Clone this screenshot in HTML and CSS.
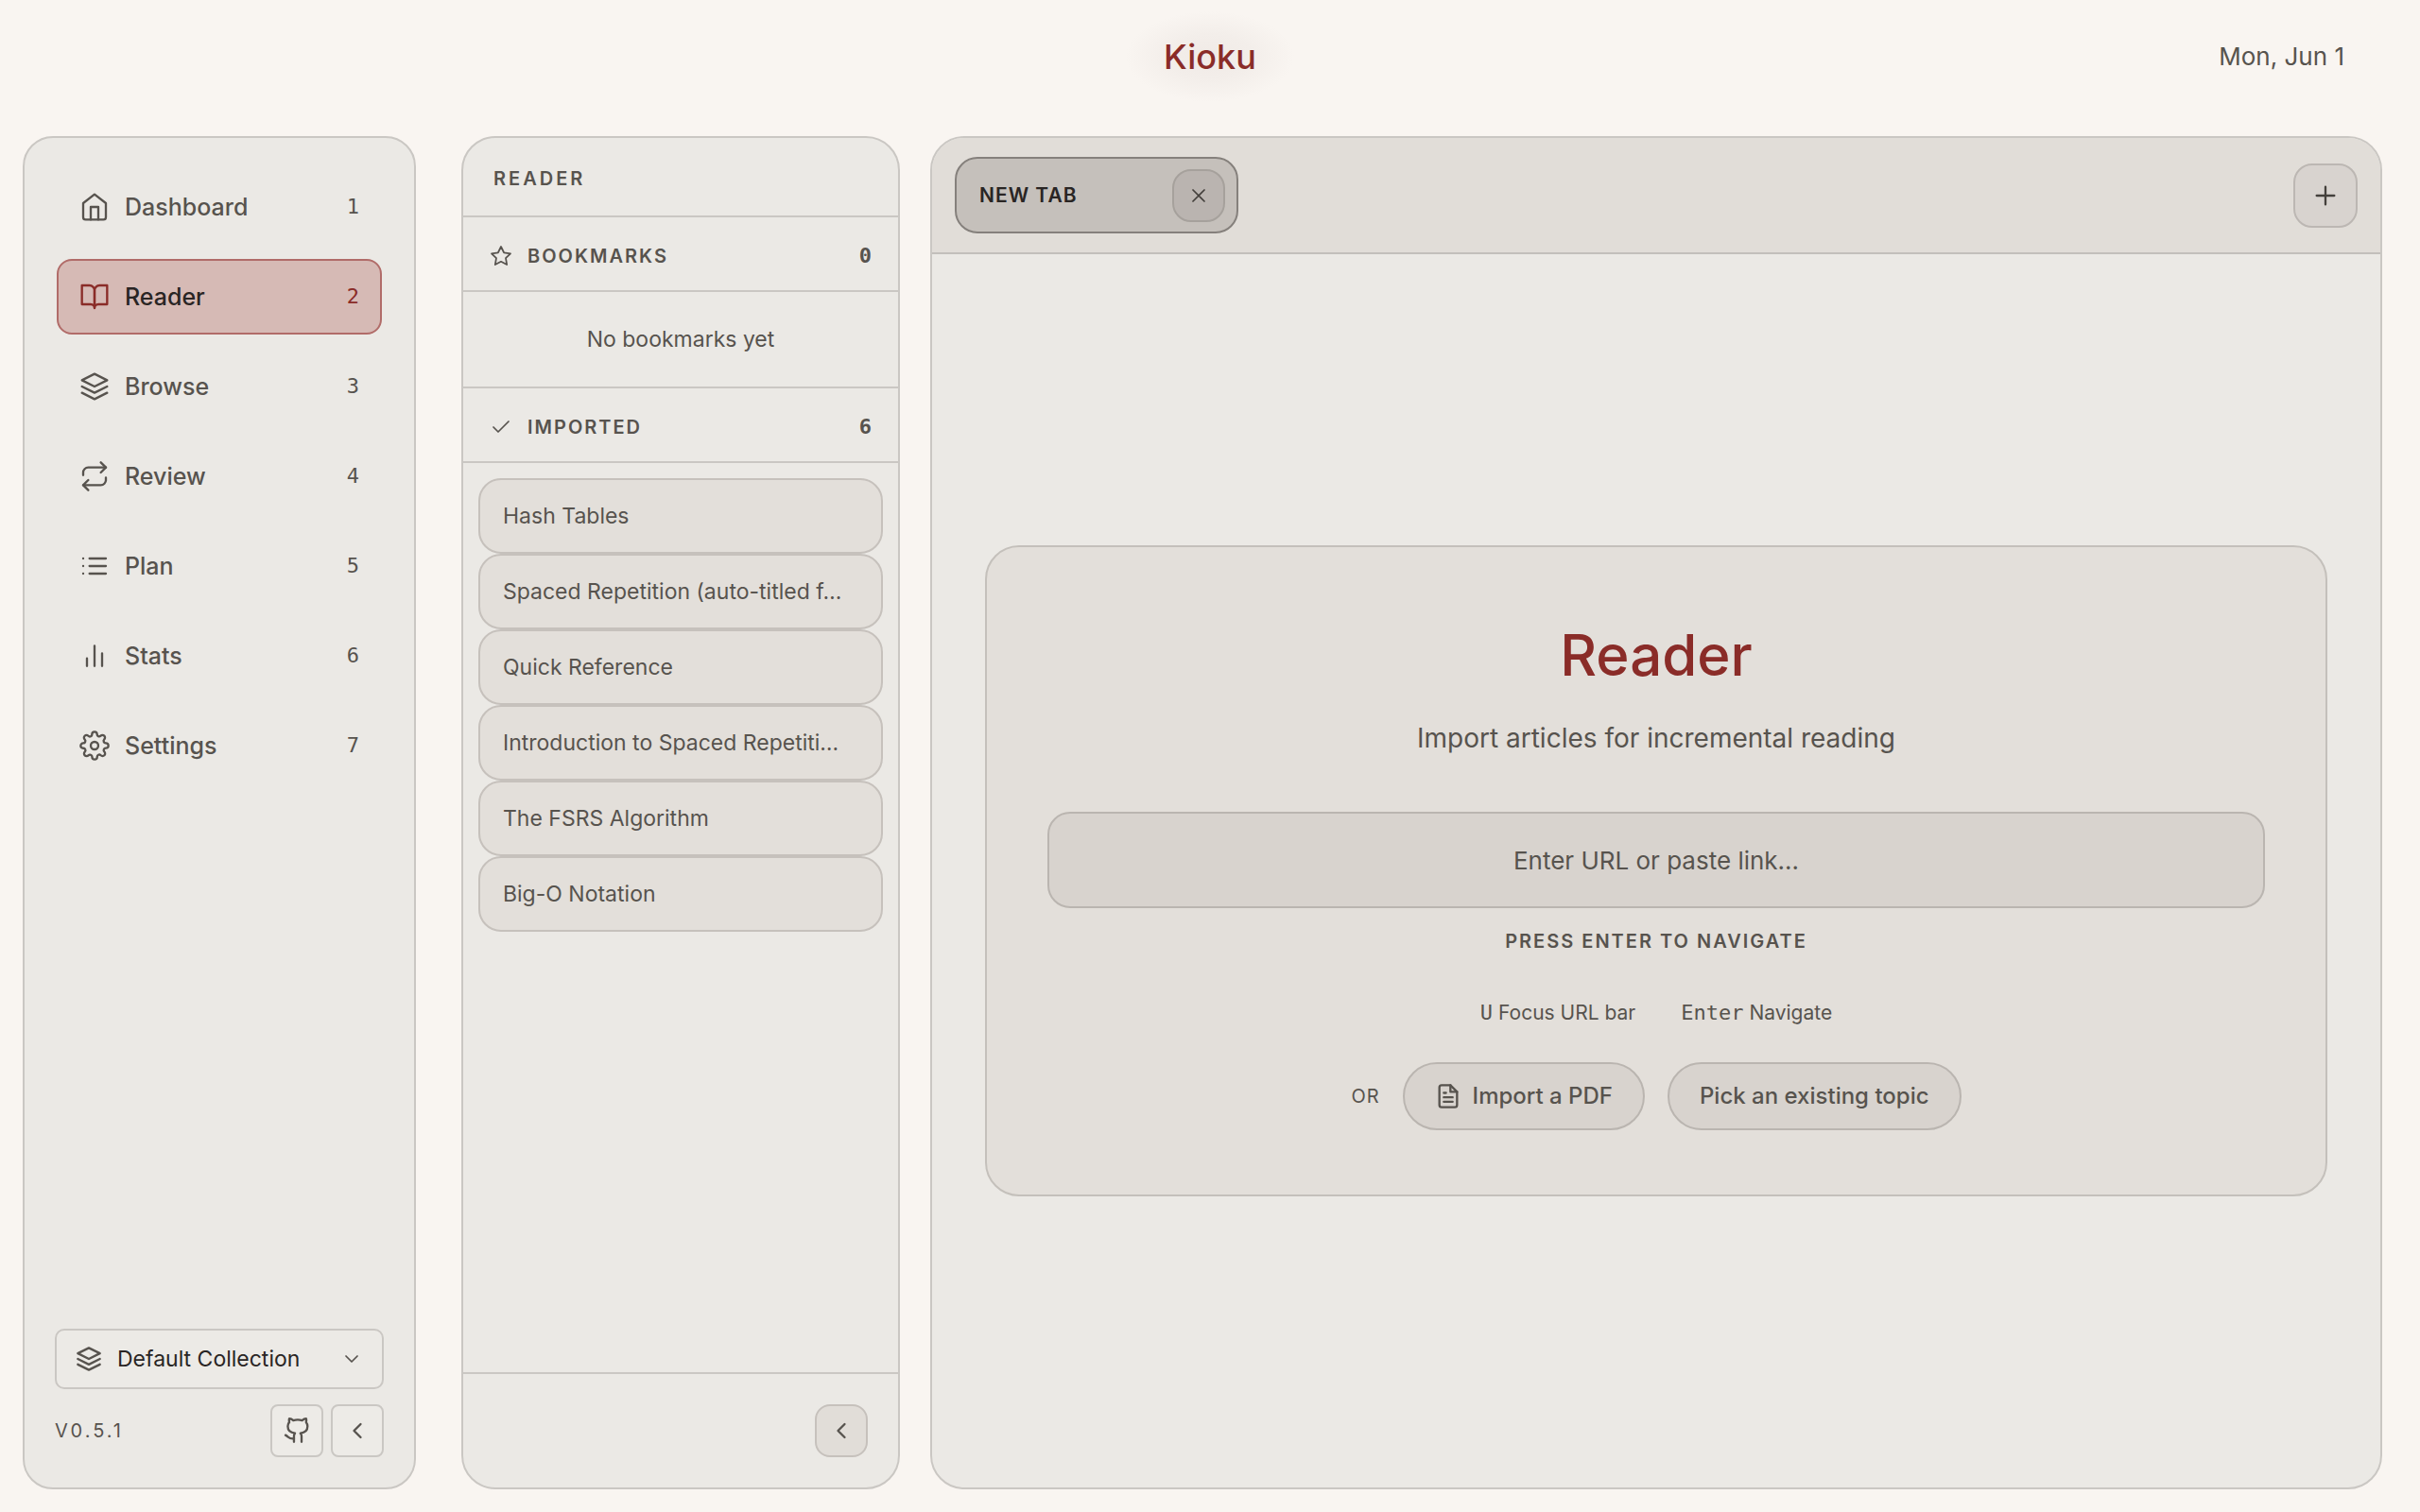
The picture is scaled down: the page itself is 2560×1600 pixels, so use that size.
FILE: index.html
```html
<!DOCTYPE html>
<html lang="en">
	<head>
		<meta charset="UTF-8">
		<meta name="viewport" content="width=device-width, initial-scale=1">
		<title>Kioku - Reader</title>
		<link rel="stylesheet" href="styles.css">
	</head>
	<body>

		<!-- icons -->
		<svg class="sprite" aria-hidden="true">
			<symbol id="i-home" viewBox="0 0 24 24">
				<path d="M3 9l9-7 9 7v11a2 2 0 0 1-2 2H5a2 2 0 0 1-2-2z"/>
				<path d="M9 22V12h6v10"/>
			</symbol>
			<symbol id="i-book" viewBox="0 0 24 24">
				<path d="M2 3h6a4 4 0 0 1 4 4v14a3 3 0 0 0-3-3H2z"/>
				<path d="M22 3h-6a4 4 0 0 0-4 4v14a3 3 0 0 1 3-3h7z"/>
			</symbol>
			<symbol id="i-layers" viewBox="0 0 24 24">
				<path d="M12 2L2 7l10 5 10-5z"/>
				<path d="M2 17l10 5 10-5"/>
				<path d="M2 12l10 5 10-5"/>
			</symbol>
			<symbol id="i-repeat" viewBox="0 0 24 24">
				<path d="M17 1l4 4-4 4"/>
				<path d="M3 11V9a4 4 0 0 1 4-4h14"/>
				<path d="M7 23l-4-4 4-4"/>
				<path d="M21 13v2a4 4 0 0 1-4 4H3"/>
			</symbol>
			<symbol id="i-list" viewBox="0 0 24 24">
				<path d="M8 6h13M8 12h13M8 18h13M3 6h.01M3 12h.01M3 18h.01"/>
			</symbol>
			<symbol id="i-stats" viewBox="0 0 24 24">
				<path d="M18 20V10M12 20V4M6 20v-6"/>
			</symbol>
			<symbol id="i-gear" viewBox="0 0 24 24">
				<circle cx="12" cy="12" r="3"/>
				<path d="M19.4 15a1.65 1.65 0 0 0 .33 1.82l.06.06a2 2 0 0 1 0 2.83 2 2 0 0 1-2.83 0l-.06-.06a1.65 1.65 0 0 0-1.82-.33 1.65 1.65 0 0 0-1 1.51V21a2 2 0 0 1-2 2 2 2 0 0 1-2-2v-.09A1.65 1.65 0 0 0 9 19.4a1.65 1.65 0 0 0-1.82.33l-.06.06a2 2 0 0 1-2.83 0 2 2 0 0 1 0-2.83l.06-.06a1.65 1.65 0 0 0 .33-1.82 1.65 1.65 0 0 0-1.51-1H3a2 2 0 0 1-2-2 2 2 0 0 1 2-2h.09A1.65 1.65 0 0 0 4.6 9a1.65 1.65 0 0 0-.33-1.82l-.06-.06a2 2 0 0 1 0-2.83 2 2 0 0 1 2.83 0l.06.06a1.65 1.65 0 0 0 1.82.33H9a1.65 1.65 0 0 0 1-1.51V3a2 2 0 0 1 2-2 2 2 0 0 1 2 2v.09a1.65 1.65 0 0 0 1 1.51 1.65 1.65 0 0 0 1.82-.33l.06-.06a2 2 0 0 1 2.83 0 2 2 0 0 1 0 2.83l-.06.06a1.65 1.65 0 0 0-.33 1.82V9a1.65 1.65 0 0 0 1.51 1H21a2 2 0 0 1 2 2 2 2 0 0 1-2 2h-.09a1.65 1.65 0 0 0-1.51 1z"/>
			</symbol>
			<symbol id="i-down" viewBox="0 0 24 24">
				<path d="M6 9l6 6 6-6"/>
			</symbol>
			<symbol id="i-left" viewBox="0 0 24 24">
				<path d="M15 18l-6-6 6-6"/>
			</symbol>
			<symbol id="i-github" viewBox="0 0 24 24">
				<path d="M16.3 22v-5c0-1.2-.4-2-1-2.700 3.600-.4 6.400-2.200 6.400-6.300 0-1.500-.5-2.800-1.300-3.800.3-1.100.3-2.200 0-3.200-1.300 0-2.500.6-3.600 1.600a14 14 0 0 0-8 0C7.700 1.600 6.500 1 5.200 1c-.3 1-.3 2.100 0 3.200-.9 1-1.400 2.300-1.400 3.800 0 4.100 2.900 5.900 6.500 6.300-.6.7-.9 1.500-.9 2.700v5"/>
				<path d="M9.400 19c-4.200 1-4.700-1.600-7.700-3"/>
			</symbol>
			<symbol id="i-star" viewBox="0 0 24 24">
				<path d="M12 2l3.09 6.26L22 9.27l-5 4.87 1.18 6.88L12 17.77l-6.18 3.25L7 14.14 2 9.27l6.91-1.01z"/>
			</symbol>
			<symbol id="i-check" viewBox="0 0 24 24">
				<path d="M20 6L9 17l-5-5"/>
			</symbol>
			<symbol id="i-close" viewBox="0 0 24 24">
				<path d="M18 6L6 18M6 6l12 12"/>
			</symbol>
			<symbol id="i-plus" viewBox="0 0 24 24">
				<path d="M12 5v14M5 12h14"/>
			</symbol>
			<symbol id="i-file" viewBox="0 0 24 24">
				<path d="M14 2H6a2 2 0 0 0-2 2v16a2 2 0 0 0 2 2h12a2 2 0 0 0 2-2V8z"/>
				<path d="M14 2v6h6M16 13H8M16 17H8M10 9H8"/>
			</symbol>
		</svg>

		<header class="topbar">
			<a class="brand" href="#">Kioku</a>
			<time class="date">Mon, Jun 1</time>
		</header>

		<div class="layout">

			<aside class="panel sidebar">
				<nav class="nav">
					<a class="nav-item" href="#"><svg class="icon"><use href="#i-home"/></svg><span>Dashboard</span><kbd>1</kbd></a>
					<a class="nav-item active" href="#"><svg class="icon"><use href="#i-book"/></svg><span>Reader</span><kbd>2</kbd></a>
					<a class="nav-item" href="#"><svg class="icon"><use href="#i-layers"/></svg><span>Browse</span><kbd>3</kbd></a>
					<a class="nav-item" href="#"><svg class="icon"><use href="#i-repeat"/></svg><span>Review</span><kbd>4</kbd></a>
					<a class="nav-item" href="#"><svg class="icon"><use href="#i-list"/></svg><span>Plan</span><kbd>5</kbd></a>
					<a class="nav-item" href="#"><svg class="icon"><use href="#i-stats"/></svg><span>Stats</span><kbd>6</kbd></a>
					<a class="nav-item" href="#"><svg class="icon"><use href="#i-gear"/></svg><span>Settings</span><kbd>7</kbd></a>
				</nav>

				<div class="sidebar-bottom">
					<label class="collection">
						<svg class="icon icon-m"><use href="#i-layers"/></svg>
						<select aria-label="Collection">
							<option>Default Collection</option>
						</select>
						<svg class="icon icon-s"><use href="#i-down"/></svg>
					</label>
					<div class="meta">
						<span class="version">v0.5.1</span>
						<a class="square" href="#" aria-label="GitHub"><svg class="icon icon-m"><use href="#i-github"/></svg></a>
						<button class="square" type="button" aria-label="Collapse sidebar"><svg class="icon icon-m"><use href="#i-left"/></svg></button>
					</div>
				</div>
			</aside>

			<aside class="panel library">
				<h2 class="library-title">Reader</h2>
				<h3 class="section-head"><svg class="icon icon-s"><use href="#i-star"/></svg><span>Bookmarks</span><b>0</b></h3>
				<p class="empty">No bookmarks yet</p>
				<h3 class="section-head"><svg class="icon icon-s"><use href="#i-check"/></svg><span>Imported</span><b>6</b></h3>
				<ul class="articles">
					<li><button type="button">Hash Tables</button></li>
					<li><button type="button">Spaced Repetition (auto-titled f…</button></li>
					<li><button type="button">Quick Reference</button></li>
					<li><button type="button">Introduction to Spaced Repetiti…</button></li>
					<li><button type="button">The FSRS Algorithm</button></li>
					<li><button type="button">Big-O Notation</button></li>
				</ul>
				<div class="library-foot">
					<button class="square soft" type="button" aria-label="Collapse library"><svg class="icon icon-m"><use href="#i-left"/></svg></button>
				</div>
			</aside>

			<main class="panel main">
				<div class="tabs">
					<div class="tab">
						<span>New Tab</span>
						<button class="tab-close" type="button" aria-label="Close tab"><svg class="icon icon-s"><use href="#i-close"/></svg></button>
					</div>
					<button class="tab-add" type="button" aria-label="New tab"><svg class="icon"><use href="#i-plus"/></svg></button>
				</div>

				<div class="stage">
					<section class="card">
						<h1>Reader</h1>
						<p class="lead">Import articles for incremental reading</p>
						<input class="url" type="text" placeholder="Enter URL or paste link…" aria-label="URL">
						<p class="press">Press Enter to navigate</p>
						<div class="hints">
							<span><kbd>U</kbd> Focus URL bar</span>
							<span><kbd>Enter</kbd> Navigate</span>
						</div>
						<div class="actions">
							<span class="or">or</span>
							<button class="pill" type="button"><svg class="icon icon-m"><use href="#i-file"/></svg>Import a PDF</button>
							<button class="pill" type="button">Pick an existing topic</button>
						</div>
					</section>
				</div>
			</main>

		</div>

	</body>
</html>
```
FILE: styles.css
```css
*{
	margin: 0;
	padding: 0;
	box-sizing: border-box;
}
:root{
	--text: #57534e;
	--dark: #292524;
	--red: #8a2c28;
	--line: #cac7c3;
	--mono: "DejaVu Sans Mono", monospace;
}
body{
	display: flex;
	flex-direction: column;
	min-height: 100vh;
	background: #f9f5f1;
	color: var(--text);
	font-family: Inter, "Liberation Sans", sans-serif;
	font-size: 23px;
	line-height: 32px;
}
a{
	color: inherit;
	text-decoration: none;
}
button,input,select{
	font: inherit;
	color: inherit;
}
button{
	cursor: pointer;
}
kbd{
	font-family: var(--mono);
}
.sprite{
	display: none;
}
.icon{
	flex: none;
	width: 32px;
	height: 32px;
	fill: none;
	stroke: currentColor;
	stroke-width: 1.75;
	stroke-linecap: round;
	stroke-linejoin: round;
}
.icon-m{
	width: 28px;
	height: 28px;
	stroke-width: 2;
}
.icon-s{
	width: 24px;
	height: 24px;
}

/* top bar */
.topbar{
	display: grid;
	grid-template-columns: 1fr auto 1fr;
	align-items: center;
	height: 120px;
	padding: 0 80px;
}
.brand{
	grid-column: 2;
	padding: 24px 40px;
	background: radial-gradient(closest-side, #f0eae6, #f3eeea 50%, #f9f5f1);
	color: var(--red);
	font-size: 36px;
	font-weight: 500;
	line-height: 48px;
}
.date{
	justify-self: end;
	font-size: 26px;
}

.layout{
	display: flex;
	flex: 1;
	padding: 24px 40px 24px 24px;
}
.panel{
	display: flex;
	flex-direction: column;
	border: 2px solid var(--line);
	border-radius: 36px;
	background: #ebe9e5;
	overflow: hidden;
}

/* sidebar */
.sidebar{
	flex: none;
	width: 416px;
	margin-right: 48px;
	padding: 32px;
	border-radius: 32px;
}
.nav{
	display: flex;
	flex-direction: column;
	gap: 15px;
	padding: 1px 2px;
}
.nav-item{
	display: flex;
	align-items: center;
	gap: 16px;
	height: 80px;
	padding: 0 22px;
	border: 2px solid transparent;
	border-radius: 16px;
	font-size: 25px;
	font-weight: 500;
}
.nav-item kbd{
	margin-left: auto;
	font-size: 22px;
	font-weight: 400;
}
.nav-item.active{
	border-color: #b16c69;
	background: #d6bab5;
	color: var(--dark);
}
.active .icon,.active kbd{
	color: var(--red);
}
.sidebar-bottom{
	margin-top: auto;
}
.collection{
	display: flex;
	align-items: center;
	gap: 16px;
	height: 64px;
	padding: 0 20px;
	border: 2px solid var(--line);
	border-radius: 10px;
	background: #eceae6;
}
.collection select{
	flex: 1;
	min-width: 0;
	border: 0;
	background: none;
	appearance: none;
	color: var(--dark);
}
.meta{
	display: flex;
	align-items: center;
	gap: 8px;
	margin-top: 16px;
}
.version{
	margin-right: auto;
	font-size: 20px;
	letter-spacing: 3px;
	text-transform: uppercase;
}
.square{
	display: flex;
	align-items: center;
	justify-content: center;
	width: 56px;
	height: 56px;
	border: 2px solid var(--line);
	border-radius: 8px;
	background: #edebe7;
}
.square.soft{
	border-color: #c6c1bc;
	border-radius: 16px;
	background: #e1ddd8;
}

/* library */
.library{
	flex: none;
	width: 464px;
	margin-right: 32px;
}
.library-title{
	padding: 27px 32px 23px;
	border-bottom: 2px solid var(--line);
	font-size: 20px;
	font-weight: 600;
	letter-spacing: 3px;
	text-transform: uppercase;
}
.section-head{
	display: flex;
	align-items: center;
	gap: 16px;
	padding: 25px 28px 20px;
	border-bottom: 2px solid var(--line);
	font-size: 20px;
	font-weight: 600;
	letter-spacing: 2px;
	text-transform: uppercase;
}
.section-head b{
	margin-left: auto;
	font-family: var(--mono);
	font-size: 22px;
	letter-spacing: 0;
}
.empty{
	padding: 34px 32px;
	border-bottom: 2px solid var(--line);
	text-align: center;
}
.articles{
	padding: 16px;
	list-style: none;
}
.articles li{
	display: flex;
}
.articles button{
	width: 100%;
	height: 80px;
	padding: 0 24px;
	border: 2px solid #c6c1bc;
	border-radius: 24px;
	background: #e3dfda;
	text-align: left;
	white-space: nowrap;
}
.library-foot{
	display: flex;
	justify-content: flex-end;
	margin-top: auto;
	padding: 32px;
	border-top: 2px solid var(--line);
}

/* reader */
.main{
	flex: 1;
	min-width: 0;
}
.tabs{
	display: flex;
	align-items: center;
	justify-content: space-between;
	padding: 20px 24px;
	border-bottom: 2px solid #c2bfbb;
	background: #e1ddd8;
}
.tab{
	display: flex;
	align-items: center;
	justify-content: space-between;
	width: 300px;
	height: 81px;
	padding: 0 12px 0 24px;
	border: 2px solid #85807c;
	border-radius: 24px;
	background: #c5c0bb;
	color: var(--dark);
	font-size: 21px;
	font-weight: 600;
	letter-spacing: 1px;
	text-transform: uppercase;
}
.tab-close{
	display: flex;
	align-items: center;
	justify-content: center;
	width: 56px;
	height: 56px;
	border: 2px solid #a6a19c;
	border-radius: 20px;
	background: #bab4b0;
	color: #44403c;
}
.tab-add{
	display: flex;
	align-items: center;
	justify-content: center;
	width: 68px;
	height: 68px;
	border: 2px solid #bcb7b3;
	border-radius: 20px;
	background: #d8d3cf;
	color: #44403c;
}
.stage{
	display: flex;
	flex: 1;
	align-items: center;
	padding: 56px;
}
.card{
	flex: 1;
	display: flex;
	flex-direction: column;
	align-items: center;
	padding: 70px 64px 68px;
	border: 2px solid #c4c0bb;
	border-radius: 36px;
	background: #e3dfda;
	text-align: center;
}
.card h1{
	color: var(--red);
	font-size: 60px;
	font-weight: 500;
	line-height: 88px;
}
.lead{
	margin-top: 24px;
	font-size: 28px;
	line-height: 40px;
}
.url{
	width: 100%;
	height: 102px;
	margin-top: 58px;
	border: 2px solid #bab5b0;
	border-radius: 24px;
	background: #d8d3ce;
	font-size: 26px;
	text-align: center;
}
.url::placeholder{
	color: var(--text);
	opacity: 1;
}
.press{
	margin-top: 19px;
	font-size: 20px;
	font-weight: 600;
	letter-spacing: 2px;
	text-transform: uppercase;
}
.hints{
	display: flex;
	gap: 48px;
	margin-top: 44px;
	font-size: 21px;
}
.hints kbd{
	font-size: 22px;
}
.actions{
	display: flex;
	align-items: center;
	gap: 24px;
	margin-top: 36px;
}
.or{
	font-size: 20px;
	letter-spacing: 1px;
	text-transform: uppercase;
}
.pill{
	display: flex;
	align-items: center;
	gap: 12px;
	height: 72px;
	padding: 0 32px;
	border: 2px solid #bab5b0;
	border-radius: 36px;
	background: #d8d3ce;
	font-size: 24px;
	font-weight: 500;
}
```
